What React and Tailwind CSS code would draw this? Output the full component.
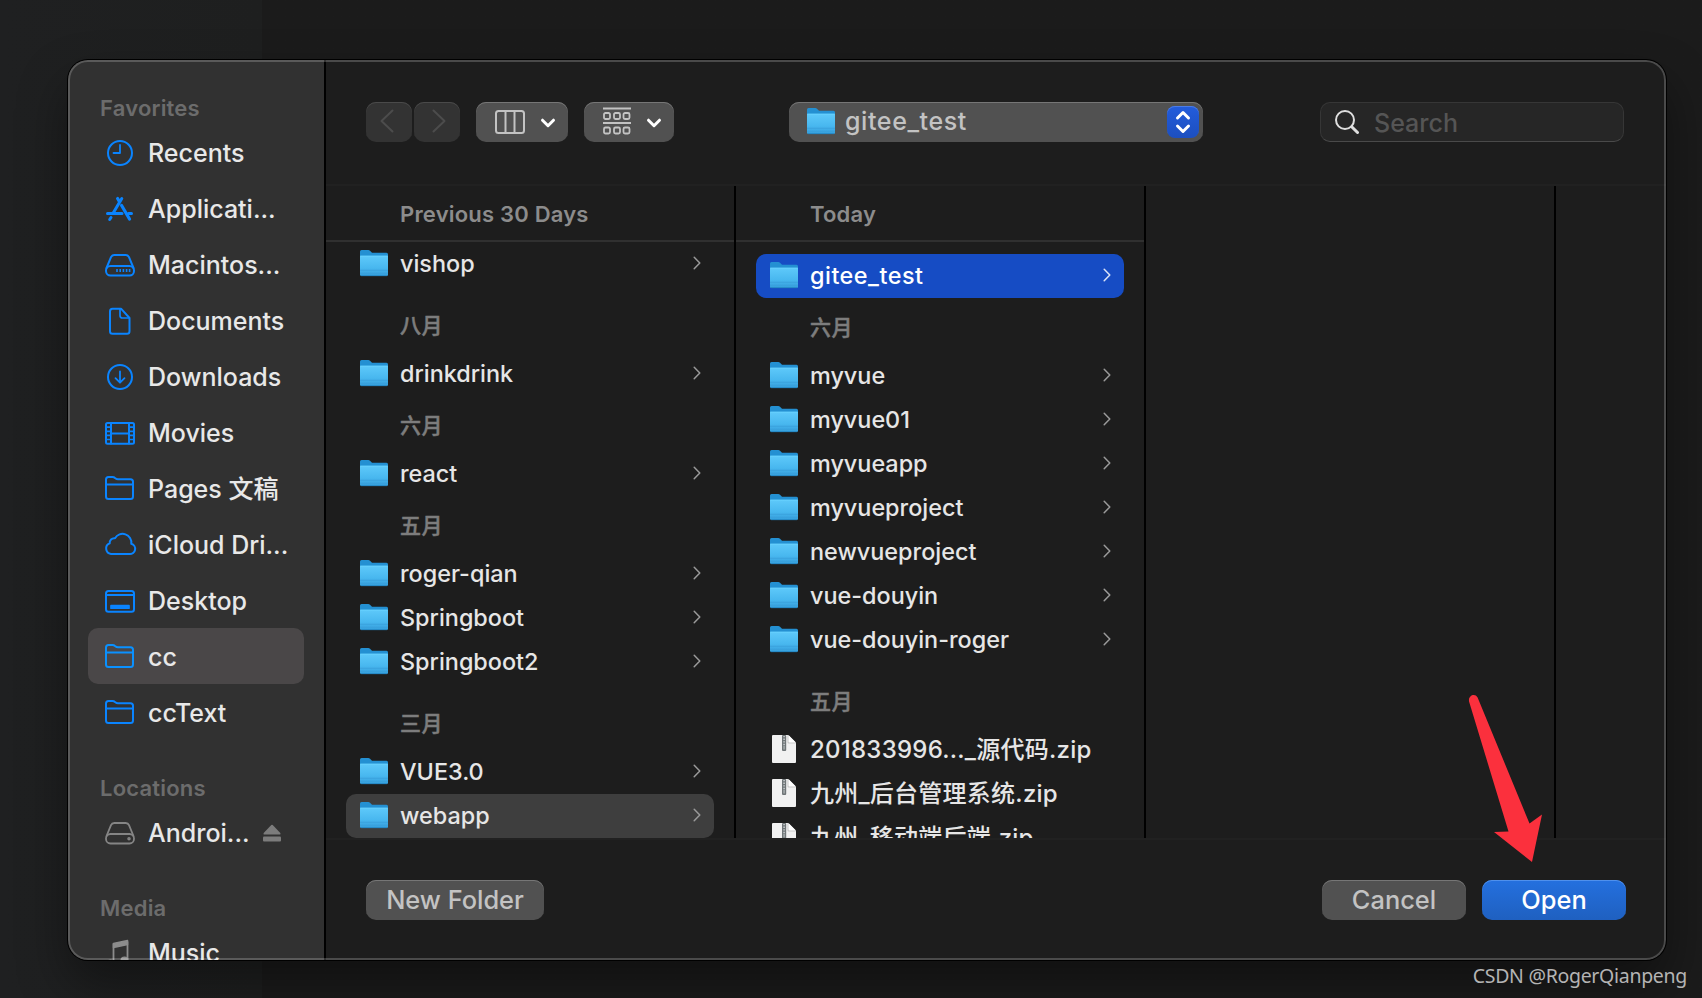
import { clsx } from "clsx";

const favorites = [
  { label: "Recents", icon: ClockIcon },
  { label: "Applicati...", icon: AppsIcon },
  { label: "Macintos...", icon: DiskIcon },
  { label: "Documents", icon: DocumentIcon },
  { label: "Downloads", icon: DownloadIcon },
  { label: "Movies", icon: FilmIcon },
  { label: "Pages 文稿", icon: FolderOutline },
  { label: "iCloud Dri...", icon: CloudIcon },
  { label: "Desktop", icon: DesktopIcon },
  { label: "cc", icon: FolderOutline, active: true },
  { label: "ccText", icon: FolderOutline },
];

const previousGroups = [
  { rows: ["vishop"] },
  { title: "八月", wide: true, rows: ["drinkdrink"] },
  { title: "六月", rows: ["react"] },
  { title: "五月", rows: ["roger-qian", "Springboot", "Springboot2"] },
  { title: "三月", wide: true, rows: ["VUE3.0", "webapp"] },
];

const todayGroups = [
  { rows: ["gitee_test"] },
  {
    title: "六月",
    rows: ["myvue", "myvue01", "myvueapp", "myvueproject", "newvueproject", "vue-douyin", "vue-douyin-roger"],
  },
  { title: "五月", wide: true, rows: ["201833996..._源代码.zip", "九州_后台管理系统.zip", "九州_移动端后端.zip"] },
];

function Glyph({ children, className }) {
  return (
    <svg
      viewBox="0 0 32 32"
      className={clsx("h-8 w-8 shrink-0", className)}
      fill="none"
      stroke="currentColor"
      strokeWidth="2"
      strokeLinecap="round"
      strokeLinejoin="round"
    >
      {children}
    </svg>
  );
}

function ClockIcon() {
  return (
    <Glyph>
      <circle cx="16" cy="17" r="12" />
      <path d="M16 9v8H9.500" strokeWidth="1.800" />
    </Glyph>
  );
}

function AppsIcon() {
  return (
    <Glyph>
      <path d="M17.800 6.500 8.900 21.500M3.500 21.500H18M24.500 21.500h3" strokeWidth="3" />
      <path d="M13.600 6.500l2 3.300M17.600 13.500 25.500 27" strokeWidth="3.200" />
      <path d="M7 25.500l-1.300 2" strokeWidth="3" />
    </Glyph>
  );
}

function DiskIcon() {
  return (
    <Glyph>
      <path d="M2.500 20 7 9.200Q7.900 7 10.200 7h11.600Q24.100 7 25 9.200L29.500 20" />
      <rect x="2" y="18" width="28" height="9.500" rx="4.500" />
      <path d="M13 21v3M16.200 21v3M19.400 21v3M22.600 21v3M25.600 21v3" strokeWidth="1.600" strokeLinecap="butt" />
    </Glyph>
  );
}

function DriveIcon() {
  return (
    <Glyph className="text-[#858585]">
      <path d="M2.500 20 7 9.200Q7.900 7 10.200 7h11.600Q24.100 7 25 9.200L29.500 20" strokeWidth="1.800" />
      <rect x="2" y="18" width="28" height="9.500" rx="4.500" strokeWidth="1.800" />
      <circle cx="25" cy="22.700" r="1" strokeWidth="1.500" />
    </Glyph>
  );
}

function DocumentIcon() {
  return (
    <Glyph>
      <path d="M17 4.700H8.500Q6 4.700 6 7.200v20Q6 29.700 8.500 29.700h14.500Q25.500 29.700 25.500 27.200V14z" />
      <path d="M16 5v6.500Q16 14 18.500 14h6.500" strokeWidth="1.700" />
    </Glyph>
  );
}

function DownloadIcon() {
  return (
    <Glyph>
      <circle cx="16" cy="17" r="12" />
      <path d="M16 11.300v11M11.500 18.200l4.500 4.500 4.500-4.500" strokeWidth="1.800" />
    </Glyph>
  );
}

function FilmIcon() {
  return (
    <Glyph>
      <rect x="2" y="7" width="28" height="20.700" rx="1.500" />
      <path d="M7 7v20.500M25 7v20.500M7 17.400h18" />
      <path d="M2 11.200h5M2 15.300h5M2 19.400h5M2 23.500h5M25 11.200h5M25 15.300h5M25 19.400h5M25 23.500h5" strokeWidth="1.700" />
    </Glyph>
  );
}

function FolderOutline() {
  return (
    <Glyph>
      <path d="M2 24.500V7.500Q2 5 4.500 5h4Q10 5 11 6l.700.600Q12.400 7.200 14 7.200h12.500Q29 7.200 29 9.700v14.800Q29 27 26.500 27h-22Q2 27 2 24.500zM2 12.500h27" />
    </Glyph>
  );
}

// cloud is a touch wider than the 32px glyph box
function CloudIcon() {
  return (
    <Glyph className="overflow-visible">
      <path d="M7 26H25.500A5.200 5.200 0 0 0 27.300 15.800 8.800 8.800 0 0 0 11 10.200 4.600 4.600 0 0 0 5.700 15.400 5.500 5.500 0 0 0 7 26z" />
    </Glyph>
  );
}

function DesktopIcon() {
  return (
    <Glyph>
      <rect x="2" y="7" width="28" height="20.700" rx="2.500" />
      <path d="M2 11h28" />
      <rect x="7" y="21.700" width="18" height="2.500" fill="currentColor" strokeWidth="1.700" />
    </Glyph>
  );
}

function MusicIcon() {
  return (
    <Glyph className="text-[#8c8c8c]">
      <path d="M9.500 7.500 23.500 4.500v4L9.500 11.500z" fill="currentColor" strokeWidth="1.500" />
      <path d="M9.500 8v19M23.500 6v17" strokeWidth="1.800" />
      <ellipse cx="6.500" cy="27" rx="3" ry="2.500" fill="currentColor" />
      <ellipse cx="20.500" cy="24" rx="3" ry="2.500" fill="currentColor" />
    </Glyph>
  );
}

function FolderIcon() {
  return (
    <svg viewBox="0 0 28 28" className="h-7 w-7 shrink-0">
      <defs>
        <linearGradient id="folder-front" x1="0" y1="0" x2="0" y2="1">
          <stop offset="0" stopColor="#5ec9fa" />
          <stop offset="0.600" stopColor="#48b7ef" />
          <stop offset="1" stopColor="#359fdc" />
        </linearGradient>
      </defs>
      <path d="M0 1.500Q0 0 1.500 0H8.300Q9.300 0 10 .700L12 2.800H26.500Q28 2.800 28 4.300V12H0z" fill="#2490d2" />
      <path d="M0 5.800H28V24.700Q28 26 26.500 26H1.500Q0 26 0 24.700z" fill="url(#folder-front)" />
      <path d="M.500 6.200h27" stroke="#6bd4ff" strokeWidth=".8" />
      <path d="M0 20.300h28M0 23.300h28" stroke="#3a9fda" strokeWidth=".8" />
      <path d="M1 25.700h26" stroke="#1f7fbd" strokeWidth=".8" />
    </svg>
  );
}

function ZipIcon() {
  return (
    <svg viewBox="0 0 24 28" className="mx-0.5 mb-0.5 h-7 w-6 shrink-0">
      <path d="M1 0H16L24 8V27Q24 28 23 28H1Q0 28 0 27V1Q0 0 1 0z" fill="#f1f1f1" />
      <path d="M15.500 0 24 8.500H16.500Q15.500 8.500 15.500 7.500z" fill="#c9c9c9" />
      <path d="M16.500 0 24 7.500H17.500Q16.500 7.500 16.500 6.500z" fill="#fff" />
      <rect x="10" y="0" width="4.200" height="16" rx="1" fill="#6f7577" />
      <path d="M12.100 1v9" stroke="#c6cacc" strokeWidth="1.600" strokeDasharray="1.300 1.300" />
      <rect x="11.200" y="10.500" width="1.800" height="4" fill="#9da3a5" />
    </svg>
  );
}

function Chevron({ className }) {
  return (
    <svg viewBox="0 0 8 14" className={clsx("h-3.5 w-2", className)} fill="none" stroke="currentColor" strokeWidth="1.500" strokeLinecap="round" strokeLinejoin="round">
      <path d="M1.200 1.200 6.800 7 1.200 12.800" />
    </svg>
  );
}

function SmallCaret() {
  return (
    <svg viewBox="0 0 16 10" className="mt-0.5 h-2.5 w-4" fill="none" stroke="#fff" strokeWidth="3" strokeLinecap="round" strokeLinejoin="round">
      <path d="M2.500 2.200 8 7.700l5.500-5.500" />
    </svg>
  );
}

function SidebarLabel({ children, className }) {
  return (
    <h2 className={clsx("flex h-8 items-center pl-8 text-[22px] font-semibold tracking-[0.2px] text-[#6c6c6c]", className)}>
      {children}
    </h2>
  );
}

function SidebarItem({ label, icon: Icon, active, children }) {
  return (
    <li className={clsx("flex h-14 items-center rounded-[10px] pl-4 text-[25px] font-medium", active && "bg-[#4a4748]")}>
      <span className={clsx("flex", active ? "text-[#0a91ff]" : "text-[#0a84ff]")}>
        <Icon />
      </span>
      <span className="ml-3 pt-1 text-[#e8e8e8]">{label}</span>
      {children}
    </li>
  );
}

function Sidebar() {
  return (
    <aside className="w-[258px] shrink-0 overflow-hidden border-r-2 border-black bg-[#313131] pt-8">
      <SidebarLabel>Favorites</SidebarLabel>
      <ul className="mx-5">
        {favorites.map((item) => (
          <SidebarItem key={item.label} {...item} />
        ))}
      </ul>
      <SidebarLabel className="mt-8">Locations</SidebarLabel>
      <ul className="mx-5">
        <SidebarItem label="Androi..." icon={DriveIcon}>
          <svg viewBox="0 0 18 18" className="mt-0.5 mr-[23px] ml-auto h-[18px] w-[18px] fill-[#7c7c7c]">
            <path d="M8.300 1Q9 .300 9.700 1L17.300 9Q18 10.500 16.800 10.500H1.200Q0 10.500.700 9z" />
            <rect x="0" y="12.500" width="18" height="5" rx="1" />
          </svg>
        </SidebarItem>
      </ul>
      <SidebarLabel className="mt-8">Media</SidebarLabel>
      <ul className="mx-5">
        <SidebarItem label="Music" icon={MusicIcon} />
      </ul>
    </aside>
  );
}

function FileRow({ name, tone }) {
  const isZip = name.endsWith(".zip");
  return (
    <li
      className={clsx(
        "mx-5 flex h-11 items-center rounded-[10px] pr-[13px] pl-3.5 font-medium",
        isZip ? "text-[24px] tracking-[0.25px]" : "text-[23.4px]",
        tone === "blue" && "bg-[#164cc4] text-white",
        tone === "gray" && "bg-[#3e3e3e] text-[#e6e6e6]",
        !tone && "text-[#e6e6e6]"
      )}
    >
      {isZip ? <ZipIcon /> : <FolderIcon />}
      <span className={clsx("ml-3 whitespace-nowrap", name.includes("_test") && "tracking-[0.5px]")}>{name}</span>
      {!isZip && <Chevron className={clsx("mb-0.5 ml-auto", tone === "blue" ? "text-[#dce4f7]" : "text-[#9a9a9a]")} />}
    </li>
  );
}

function Column({ title, groups, selected, tone, spaced }) {
  return (
    <section className="flex w-[410px] shrink-0 flex-col overflow-hidden border-r-2 border-black">
      <h3 className="flex h-14 shrink-0 items-center border-b-2 border-[#303030] pt-[3px] pl-[74px] text-[22px] font-semibold tracking-[0.2px] text-[#8c8c8c]">
        {title}
      </h3>
      <div className={clsx("min-h-0 flex-1 overflow-hidden", spaced && "pt-3")}>
        {groups.map((group) => (
          <div key={group.rows[0]}>
            {group.title && (
              <h4
                className={clsx(
                  "flex items-center pl-[74px] text-[21px] font-medium tracking-[0.5px] text-[#7d7d7d] [-webkit-text-stroke:0.5px_#7d7d7d]",
                  group.wide ? "h-[66px] pt-3.5" : "h-14 pt-1"
                )}
              >
                {group.title}
              </h4>
            )}
            <ul>
              {group.rows.map((name) => (
                <FileRow key={name} name={name} tone={name === selected ? tone : undefined} />
              ))}
            </ul>
          </div>
        ))}
      </div>
    </section>
  );
}

const pushButton =
  "flex h-10 items-center rounded-[10px] bg-[#515151] shadow-[inset_0_1px_0_#767676] text-[#c3c3c3]";

function Toolbar() {
  return (
    <header className="flex h-[126px] shrink-0 items-start border-b-2 border-[#212121] pt-[42px] pl-10">
      <div className="flex gap-0.5 text-[#4c4c4c]">
        <button aria-label="Back" className="grid h-10 w-[46px] place-items-center rounded-[10px] bg-[#333] shadow-[inset_0_1px_0_#4a4a4a]">
          <svg viewBox="0 0 14 24" className="mr-1 mb-0.5 h-6 w-3.5" fill="none" stroke="currentColor" strokeWidth="2" strokeLinecap="round" strokeLinejoin="round">
            <path d="M12.500 1.500 1.500 12l11 10.500" />
          </svg>
        </button>
        <button aria-label="Forward" className="grid h-10 w-[46px] place-items-center rounded-[10px] bg-[#333] shadow-[inset_0_1px_0_#4a4a4a]">
          <svg viewBox="0 0 14 24" className="mb-0.5 ml-1 h-6 w-3.5" fill="none" stroke="currentColor" strokeWidth="2" strokeLinecap="round" strokeLinejoin="round">
            <path d="M1.500 1.500 12.500 12l-11 10.500" />
          </svg>
        </button>
      </div>

      <button aria-label="Column view" className={clsx(pushButton, "ml-4 w-[92px] justify-between pr-3 pl-[19px]")}>
        <svg viewBox="0 0 30 24" className="mb-px h-6 w-[30px]" fill="none" stroke="currentColor" strokeWidth="2">
          <rect x="1" y="1" width="28" height="22" rx="2.500" />
          <path d="M10.500 1v22M19.500 1v22" />
        </svg>
        <SmallCaret />
      </button>

      <button aria-label="Group by" className={clsx(pushButton, "ml-4 w-[90px] justify-between pr-3 pl-[19px]")}>
        <svg viewBox="0 0 28 28" className="mb-0.5 h-7 w-7" fill="none" stroke="currentColor" strokeWidth="1.800">
          <path d="M0 1.500h28M0 16h28" />
          <rect x="1" y="6" width="6" height="6" rx="1.500" />
          <rect x="11" y="6" width="6" height="6" rx="1.500" />
          <rect x="20.500" y="6" width="6" height="6" rx="1.500" />
          <rect x="1" y="20.500" width="6" height="6" rx="1.500" />
          <rect x="11" y="20.500" width="6" height="6" rx="1.500" />
          <rect x="20.500" y="20.500" width="6" height="6" rx="1.500" />
        </svg>
        <SmallCaret />
      </button>

      <button className={clsx(pushButton, "ml-[115px] w-[414px] pr-1 pl-[18px] text-[25px] font-medium")}>
        <FolderIcon />
        <span className="ml-[10px] tracking-[0.6px]">gitee_test</span>
        <span className="ml-auto grid h-8 w-8 place-items-center rounded-lg bg-linear-to-b from-[#235cdc] to-[#1c4fbf] shadow-[inset_0_1px_0_#4b7ce6]">
          <svg viewBox="0 0 16 24" className="h-6 w-4" fill="none" stroke="#fff" strokeWidth="3" strokeLinecap="round" strokeLinejoin="round">
            <path d="M2.500 8 8 2.500 13.500 8M2.500 16 8 21.500 13.500 16" />
          </svg>
        </span>
      </button>

      <label className="ml-[117px] flex h-10 w-[304px] items-center rounded-[10px] border border-b-[#4a4a4a] border-[#363636] bg-[#262626] pl-3.5 text-[25px] font-medium text-[#555]">
        <svg viewBox="0 0 24 24" className="h-6 w-6" fill="none" stroke="#dedede" strokeLinecap="round">
          <circle cx="10" cy="10" r="9" strokeWidth="2" />
          <path d="M16.700 16.700 22.500 22.500" strokeWidth="3" />
        </svg>
        <span className="ml-[15px] pt-[3px]">Search</span>
      </label>
    </header>
  );
}

function Footer() {
  return (
    <footer className="flex h-[122px] shrink-0 items-start border-t-2 border-[#212121] px-10 pt-10 text-[25.4px] font-medium">
      <button className={clsx(pushButton, "w-[178px] justify-center")}>New Folder</button>
      <button className={clsx(pushButton, "ml-auto w-36 justify-center")}>Cancel</button>
      <button className="ml-4 flex h-10 w-36 items-center justify-center rounded-[10px] bg-linear-to-b from-[#2470df] to-[#1f60c0] text-white shadow-[inset_0_1px_0_#4f90ec]">
        Open
      </button>
    </footer>
  );
}

export default function App() {
  return (
    <div className="relative h-[998px] w-[1702px] overflow-hidden bg-linear-to-r from-[#1f2021] from-0% via-[#1e1f1f] via-[262px] to-[#1b1b1b] to-[262px] pt-[60px] pl-[68px] font-['Inter','Noto_Sans_CJK_SC',sans-serif]">
      <div className="relative flex h-[900px] w-[1598px] overflow-hidden rounded-[20px] bg-[#1d1d1d] shadow-[0_0_0_1px_#000,0_24px_50px_rgba(0,0,0,0.4)]">
        <Sidebar />
        <main className="flex min-w-0 flex-1 flex-col">
          <Toolbar />
          <div className="flex min-h-0 flex-1 overflow-hidden">
            <Column title="Previous 30 Days" groups={previousGroups} selected="webapp" tone="gray" />
            <Column title="Today" groups={todayGroups} selected="gitee_test" tone="blue" spaced />
            <section className="w-[410px] shrink-0 border-r-2 border-black" />
          </div>
          <Footer />
        </main>
        {/* light rim over the panel edge */}
        <div className="pointer-events-none absolute inset-0 rounded-[20px] border-2 border-white/20" />
      </div>

      {/* arrow pointing at the Open button */}
      <svg viewBox="0 0 74 168" className="absolute top-[694px] left-[1468px] h-[168px] w-[74px] fill-[#fb303d]">
        <path d="M1.200 8C-.500 1.500 7 -1.500 9.600 3.500L61.500 129.500 74 120.500 64 168 26 138 40.500 137.500z" />
      </svg>

      <p className="absolute top-[962px] right-[15px] font-['Noto_Sans'] text-[19.5px] leading-7 tracking-[-0.3px] text-[#b4b4b4]">
        CSDN @RogerQianpeng
      </p>
    </div>
  );
}
